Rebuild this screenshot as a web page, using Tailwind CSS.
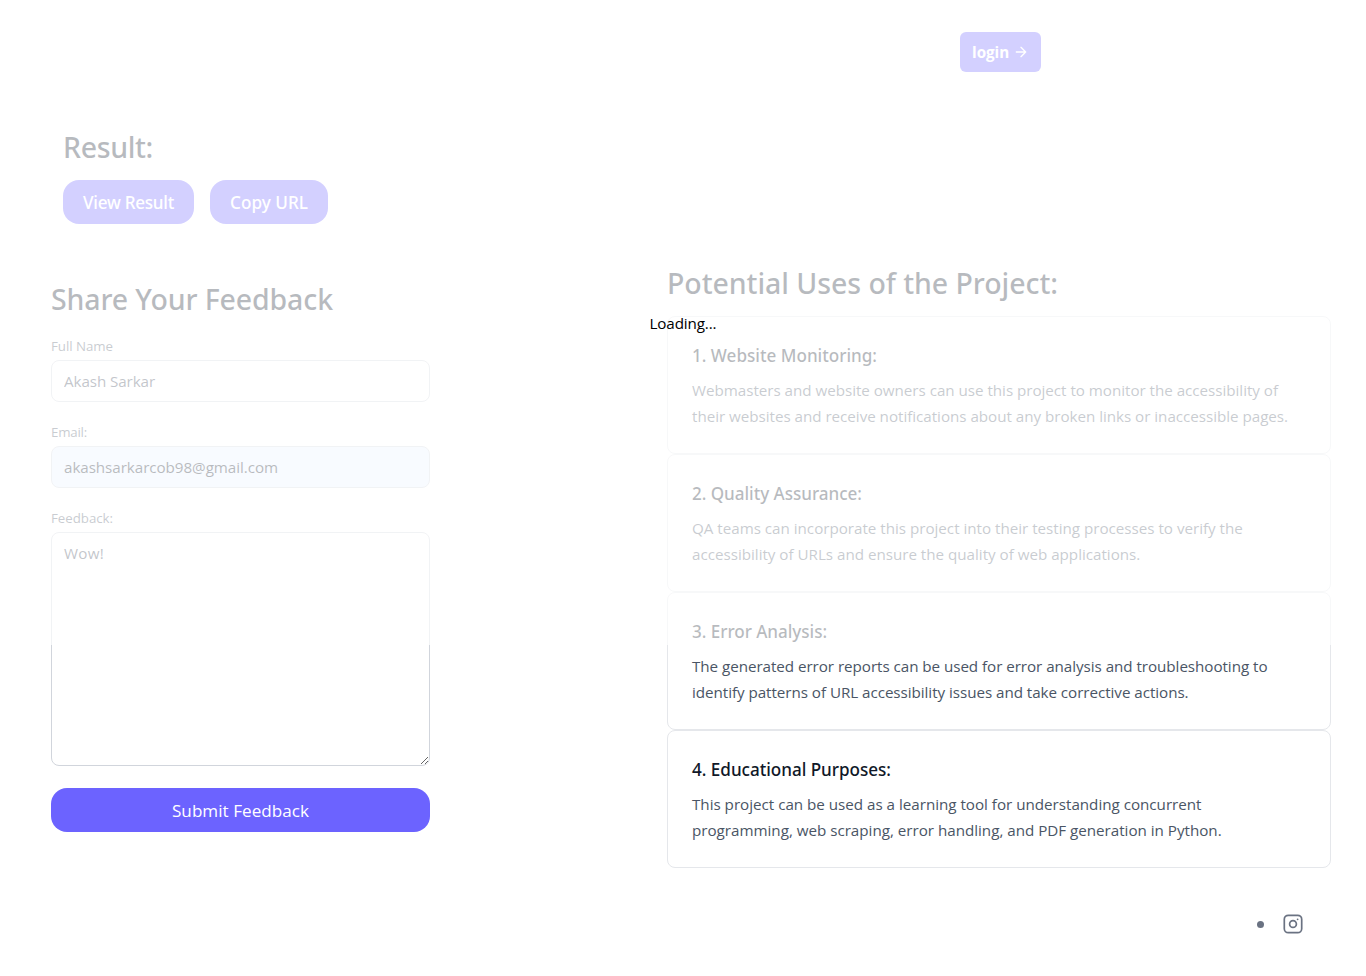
<!DOCTYPE html>
<html lang="en">
<head>
<meta charset="utf-8">
<title>Feedback</title>
<script src="https://cdn.jsdelivr.net/npm/@tailwindcss/browser@4"></script>
</head>
<body class="relative h-[976px] overflow-hidden bg-white font-['Open_Sans','Noto_Sans',sans-serif] text-[15.2px] text-gray-900">
  <header class="flex h-[104px] items-center pl-[960px]">
    <button class="flex h-10 w-[81px] items-center rounded-md bg-[#6c63ff] pl-3 font-bold text-white">
      <span class="w-[37px] whitespace-nowrap">login</span>
      <svg class="ml-1 h-4 w-4" viewBox="0 0 24 24" fill="none" stroke="currentColor" stroke-width="2" stroke-linecap="round" stroke-linejoin="round"><path d="M5 12h14M12 5l7 7-7 7"/></svg>
    </button>
  </header>

  <section class="ml-[63px] h-[161px] pt-[25px]">
    <h1 class="h-9 font-['Noto_Sans'] text-[28.5px] leading-9 font-medium tracking-[-0.35px]">Result:</h1>
    <div class="mt-[15px] flex gap-4 font-['Noto_Sans'] text-[17.1px] text-white">
      <button class="h-11 w-[131px] rounded-2xl bg-[#6c63ff] pt-px font-medium tracking-[-0.24px]">View Result</button>
      <button class="h-11 w-[118px] rounded-2xl bg-[#6c63ff] pt-px font-medium tracking-[0.05px]">Copy URL</button>
    </div>
  </section>

  <main class="flex h-[603px] pl-[51px]">
    <form class="w-[379px] pt-4">
      <h2 class="h-9 whitespace-nowrap font-['Noto_Sans'] text-[28.5px] leading-9 font-medium tracking-[-0.13px]">Share Your Feedback</h2>
      <label class="mt-[15px] block h-7 text-[13.3px] leading-7 tracking-[-0.04px] text-gray-600">Full Name</label>
      <input class="block h-[42px] w-full rounded-lg border border-gray-300 px-3 tracking-[-0.09px] text-gray-700" value="Akash Sarkar">
      <label class="mt-4 block h-6 pt-0.5 text-[13.3px] leading-6 tracking-[-0.21px] text-gray-600">Email:</label>
      <input class="mt-1 block h-[42px] w-full rounded-lg border border-gray-300 bg-[#e8f0fe] px-3 tracking-[-0.057px] text-gray-900" value="akashsarkarcob98@gmail.com">
      <label class="mt-4 block h-6 pt-0.5 text-[13.3px] leading-6 tracking-[-0.035px] text-gray-600">Feedback:</label>
      <textarea class="mt-1 block h-[234px] w-full rounded-lg border border-gray-300 px-3 py-2 leading-6 tracking-[0.26px] text-gray-700">Wow!</textarea>
      <button class="mt-[22px] block h-11 w-full rounded-2xl bg-[#6c63ff] pt-0.5 text-[17.1px] tracking-[0.03px] text-white">Submit Feedback</button>
    </form>

    <section class="ml-[237px] w-[664px] whitespace-nowrap">
      <h2 class="h-[51px] font-['Noto_Sans'] text-[28.5px] leading-9 font-medium tracking-[-0.07px]">Potential Uses of the Project:</h2>
      <article class="h-[138px] rounded-lg border border-gray-200 p-6 pt-[25px]">
        <h3 class="mb-[7px] font-['Noto_Sans'] text-[17.1px] leading-7 font-medium">1. Website Monitoring:</h3>
        <p class="leading-[26px] tracking-[-0.031px] text-gray-600">Webmasters and website owners can use this project to monitor the accessibility of<br>their websites and receive notifications about any broken links or inaccessible pages.</p>
      </article>
      <article class="h-[138px] rounded-lg border border-gray-200 p-6 pt-[25px]">
        <h3 class="mb-[7px] font-['Noto_Sans'] text-[17.1px] leading-7 font-medium tracking-[-0.038px]">2. Quality Assurance:</h3>
        <p class="leading-[26px] tracking-[-0.016px] text-gray-600">QA teams can incorporate this project into their testing processes to verify the<br>accessibility of URLs and ensure the quality of web applications.</p>
      </article>
      <article class="h-[138px] rounded-lg border border-gray-200 p-6 pt-[25px]">
        <h3 class="mb-[7px] font-['Noto_Sans'] text-[17.1px] leading-7 font-medium tracking-[-0.047px]">3. Error Analysis:</h3>
        <p class="leading-[26px] tracking-[-0.046px] text-gray-600">The generated error reports can be used for error analysis and troubleshooting to<br>identify patterns of URL accessibility issues and take corrective actions.</p>
      </article>
      <article class="h-[138px] rounded-lg border border-gray-200 p-6 pt-[25px]">
        <h3 class="mb-[7px] font-['Noto_Sans'] text-[17.1px] leading-7 font-medium tracking-[-0.023px]">4. Educational Purposes:</h3>
        <p class="leading-[26px] tracking-[-0.015px] text-gray-600">This project can be used as a learning tool for understanding concurrent<br>programming, web scraping, error handling, and PDF generation in Python.</p>
      </article>
    </section>
  </main>

  <footer class="flex h-[112px] items-center justify-end gap-[19px] pr-[63px] text-gray-500">
    <span class="h-[7px] w-[7px] rounded-full bg-gray-500"></span>
    <svg class="h-5 w-5" viewBox="0 0 20 20" fill="none" stroke="currentColor" stroke-width="1.7"><rect x="1.3" y="1.3" width="17.4" height="17.4" rx="4"/><circle cx="10" cy="10" r="3.4"/><circle cx="14.6" cy="5.3" r="0.9" fill="currentColor" stroke="none"/></svg>
  </footer>

  <div class="absolute inset-x-0 top-0 flex h-[645px] items-center justify-center bg-white/70 pt-0.5 tracking-[-0.117px] text-black">Loading...</div>
</body>
</html>
